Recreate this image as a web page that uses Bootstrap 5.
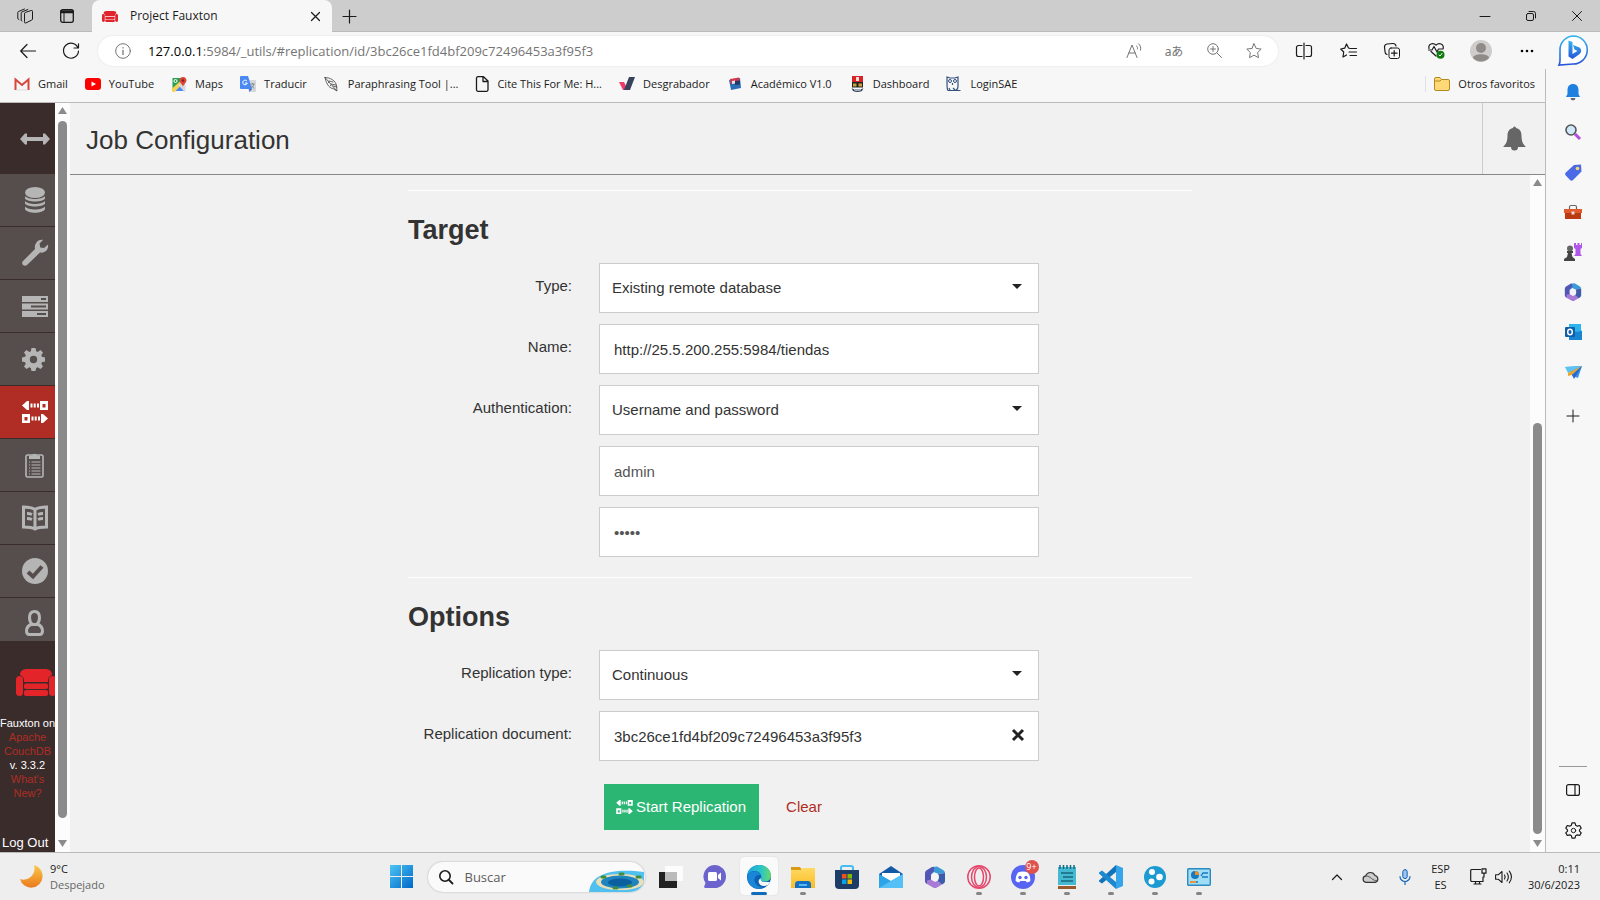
<!DOCTYPE html>
<html lang="es">
<head>
<meta charset="utf-8">
<meta name="viewport" content="width=device-width, initial-scale=1">
<title>Project Fauxton</title>
<link rel="stylesheet" href="https://cdn.jsdelivr.net/npm/bootstrap@5.3.0/dist/css/bootstrap.min.css">
<style>
  body { height: 100vh; overflow: hidden; background: #f7f7f7; color: #1b1b1b; font: 12px/16px "Open Sans", "Noto Sans", sans-serif; }
  svg { display: block; flex: none; overflow: visible; }
  .ln { fill: none; stroke: currentColor; stroke-linecap: round; stroke-linejoin: round; }
  .bare { background: none; border: 0; padding: 0; color: inherit; display: flex; align-items: center; justify-content: center; flex: none; }
  a { text-decoration: none; }

  /* browser frame */
  .titlebar { height: 32px; background: #cdcdcd; box-shadow: inset 0 -1px #bbb; }
  .w-34 { width: 34px; }
  .w-42 { width: 42px; }
  .w-46 { width: 46px; }
  .browser-tab { width: 240px; height: 32px; background: #f7f7f7; border-radius: 8px 8px 0 0; padding: 0 12px 0 10px; }
  .toolbar { height: 37px; color: #1b1b1b; }
  .address { height: 30px; background: #fff; border-radius: 15px; color: #757575; box-shadow: 0 0 2px #ddd; }
  .address .url { font-size: 13px; }
  .translate { font: 12px "Noto Sans", "Noto Sans CJK JP", sans-serif; }
  .w-40 { width: 40px; }
  .w-44 { width: 44px; }
  .bookmarks { height: 34px; border-bottom: 1px solid #bbb; padding: 0 10px 3px 14px; font-size: 11px; gap: 17px; }
  .bookmarks a { color: #1b1b1b; gap: 8px; white-space: nowrap; }
  .edgebar { width: 55px; border-left: 1px solid #bbb; padding-top: 3px; padding-bottom: 2px; }
  .edgebar .bare { width: 54px; height: 40px; }
  .edgebar hr { width: 28px; margin: 0 auto 3px; color: #999; opacity: 1; }

  /* Fauxton */
  .fauxton { font-family: "Liberation Sans", Arial, sans-serif; background: #f1f1f1; color: #333; }
  .mainnav { width: 55px; background: #3a2c2b; overflow: hidden; color: #b5b5b5; }
  .mainnav .burger { height: 71px; padding-left: 20px; justify-content: flex-start; width: 55px; }
  .mainnav .item { height: 53px; background: #564e4c; border-bottom: 1px solid #3a2c2b; padding-left: 22px; display: flex; align-items: center; color: #b5b5b5; }
  .mainnav .item.active { background: #af2d24; color: #fff; }
  .mainnav .item.last { height: 43px; border: 0; padding-top: 6px; }
  .navfoot { font-size: 11px; line-height: 14px; color: #fff; text-align: center; }
  .navfoot a { color: #af2d24; display: block; }
  .logout { font-size: 13px; color: #fff; padding: 0 0 1px 2px; white-space: nowrap; }
  .vbar { width: 15px; background: #fcfcfc; color: #8b8b8b; padding: 4px 3px; }
  .vbar .thumb { width: 9px; border-radius: 5px; background: #8b8b8b; margin: 6px 0 22px; }
  .vbar .above { flex: 73 0 0; }
  .vbar .thumb.lower { flex: 127 0 0; margin: 0 0 6px; }
  .pagehead { height: 72px; border-bottom: 1px solid #888; }
  .pagehead h1 { font-size: 26px; line-height: 32px; margin: 3px 0 0 16px; font-weight: 400; }
  .bellcell { width: 63px; border-left: 1px solid #ccc; color: #666; }
  .formcol { width: 784px; max-width: 100%; margin: 0 auto; padding-top: 15px; }
  .formcol hr { margin: 0; border-top: 1px solid #fff; opacity: 1; }
  .formcol .fieldrow + hr { margin-top: 20px; }
  .formcol h2 { font-size: 27px; line-height: 32px; font-weight: 700; margin: 23px 0 17px; }
  .fieldrow { display: grid; grid-template-columns: 164px 440px; column-gap: 27px; margin-bottom: 11px; font-size: 15px; }
  .fieldrow label { text-align: right; line-height: 20px; padding-top: 13px; }
  .fieldrow .form-control, .fieldrow .form-select { height: 50px; border: 1px solid #ccc; border-radius: 0; font-size: 15px; background: #fff; color: #333; padding: 0 14px; }
  .fieldrow .form-select { padding: 0 12px; }
  .fieldrow .form-control.soft { color: #555; }
  .overlay { position: absolute; right: 17px; top: 21px; pointer-events: none; }
  .overlay.x { top: 18px; right: 15px; pointer-events: auto; }
  .btn-go { background: #2cb673; color: #fff; border: 0; border-radius: 0; height: 46px; padding: 0 13px 0 12px; font-size: 15px; display: flex; align-items: center; gap: 3px; }
  .actions { padding-left: 196px; margin-top: 23px; gap: 27px; }
  .actions .bare { color: #af2d24; font-size: 15px; }

  /* taskbar */
  .taskbar { height: 48px; background: #eee; border-top: 1px solid #bbb; display: grid; grid-template-columns: 1fr auto 1fr; font-size: 11px; }
  .task { width: 44px; height: 47px; position: relative; }
  .task.on::before { content: ""; position: absolute; inset: 4px 3px 5px; background: #fafafa; border-radius: 4px; box-shadow: 0 0 1px #bbb; }
  .task svg { position: relative; }
  .task.run::after, .task.on::after { content: ""; position: absolute; bottom: 5px; left: 19px; width: 6px; height: 3px; border-radius: 2px; background: #858585; }
  .task.on::after { left: 14px; width: 16px; background: #0f6cbd; }
  .searchbox { width: 217px; height: 30px; margin: 0 4px; border-radius: 15px; background: #fafafa; box-shadow: 0 0 2px #aaa; overflow: hidden; padding-left: 11px; }
  .searchbox input { border: 0; background: none; padding: 0; width: 120px; font-size: 13px; outline: 0; }
  .searchbox input::placeholder { color: #5c5c5c; }
  .weather { line-height: 16px; margin-left: 7px; }
  .weather .sky { color: #666; }
  .count { position: absolute; right: 6px; top: 7px; width: 14px; height: 14px; border-radius: 7px; background: #e0524d; color: #fff; font-size: 9px; line-height: 14px; text-align: center; z-index: 1; }
</style>
</head>
<body class="d-flex flex-column">

<svg width="0" height="0" class="position-absolute" aria-hidden="true">
  <defs>
    <linearGradient id="gBlue" x1="0" y1="0" x2="1" y2="1"><stop offset="0" stop-color="#4cc5f5"/><stop offset="1" stop-color="#0067c8"/></linearGradient>
    <linearGradient id="gBing" x1="0" y1="0" x2="0" y2="1"><stop offset="0" stop-color="#35b5ee"/><stop offset="1" stop-color="#2954d8"/></linearGradient>
    <linearGradient id="gEdge" x1="0" y1="0" x2="1" y2="0"><stop offset="0" stop-color="#1ba3df"/><stop offset=".6" stop-color="#2cc6c5"/><stop offset="1" stop-color="#68d968"/></linearGradient>
    <linearGradient id="gMoon" x1="0" y1="0" x2="0" y2="1"><stop offset="0" stop-color="#f9c847"/><stop offset="1" stop-color="#ea7a1f"/></linearGradient>
    <linearGradient id="gFold" x1="0" y1="0" x2="0" y2="1"><stop offset="0" stop-color="#ffda63"/><stop offset="1" stop-color="#fbbb25"/></linearGradient>
  </defs>
  <symbol id="sofa" viewBox="0 0 40 27">
    <path d="M4 6C4 2 7 0 11 0h18c4 0 7 2 7 6-3 1-4 3-4 6v1H8v-1c0-3-1-5-4-6z"/><rect x="0" y="7" width="7" height="20" rx="3.500"/><rect x="33" y="7" width="7" height="20" rx="3.500"/><rect x="8" y="14.500" width="24" height="5.500" rx="2"/><rect x="8" y="21" width="24" height="6" rx="2"/>
  </symbol>
  <symbol id="repl" viewBox="0 0 26 22">
    <path d="M7 0v9H5L0 4.500 5 0zM8.500 2.500h2v4h-2zM11.700 2.500h2v4h-2zM15 2.500h2v4h-2zM19 13v9h2l5-4.500-5-4.500zM9.500 15.500h2v4h-2zM12.700 15.500h2v4h-2zM16 15.500h2v4h-2z"/><path fill-rule="evenodd" d="M18 0h8v9h-8zM20.500 3v3.500h3V3zM0 13h8v9H0zM2.500 16v3.500h3V16z"/>
  </symbol>
  <symbol id="m365" viewBox="0 0 22 22">
    <path d="M8 1l5-.6L19 4c1 .6 2 1.600 2 3l-7 1-4-2-3 3V4z" fill="#3b9bd8"/><path d="M8 1L3 4C2 4.600 1 6 1 7v8c0 1.500 1 2.500 2 3l4-3V8l3-3V1z" fill="#5256b4"/><path d="M3 18l6 3.500c1.500.8 3 .8 4 0l5-3-4-4-3 1.500-4-2.500-4 1z" fill="#a77bd6"/><path d="M21 7v8c0 1.500-1 2.500-3 3.500L14 15V8z" fill="#3c5ba9"/><circle cx="11" cy="11" r="4" fill="#f4f4f4"/>
  </symbol>
</svg>

<header class="titlebar d-flex align-items-center">
  <div class="d-flex align-items-center ps-1">
    <button class="bare w-42" aria-label="Áreas de trabajo"><svg width="18" height="16" class="ln" viewBox="0 0 18 16"><path d="M8.500 5.500a1 1 0 0 1 .7-1l6-2a1 1 0 0 1 1.300 1V11a1 1 0 0 1-.7 1l-6 3a1 1 0 0 1-1.300-1zM6 13l-.8-.5V5a1 1 0 0 1 .7-1l6-2.500M3 11.500l-1.200-.8V4.500a1 1 0 0 1 .7-1l6-2.500"/></svg></button>
    <button class="bare w-42" aria-label="Acciones de pestaña"><svg width="14" height="14" class="ln" viewBox="0 0 14 14"><rect x=".7" y=".7" width="12.600" height="12.600" rx="2" stroke-width="1.300"/><path d="M1 2h12M1 3.500h12" stroke-width="1.600"/><path d="M4 4v9"/></svg></button>
  </div>
  <div class="browser-tab d-flex align-items-center ms-1">
    <svg width="16" height="11" fill="#e0242b"><use href="#sofa"/></svg>
    <span class="ms-2 ps-1 flex-grow-1">Project Fauxton</span>
    <button class="bare" aria-label="Cerrar pestaña"><svg width="9" height="9" class="ln" viewBox="0 0 9 9"><path d="M.5.5l8 8M8.500.5l-8 8" stroke-width="1.200"/></svg></button>
  </div>
  <button class="bare w-34" aria-label="Nueva pestaña"><svg width="13" height="13" class="ln" viewBox="0 0 13 13"><path d="M6.500 0v13M0 6.500h13" stroke-width="1.200"/></svg></button>
  <div class="d-flex ms-auto">
    <button class="bare w-46" aria-label="Minimizar"><svg width="10" height="10" class="ln"><path d="M0 5.500h10"/></svg></button>
    <button class="bare w-46" aria-label="Restaurar"><svg width="10" height="10" class="ln" viewBox="0 0 10 10"><rect x=".5" y="2.500" width="7" height="7" rx="1.500"/><path d="M3 .5h4.500a2 2 0 0 1 2 2V7"/></svg></button>
    <button class="bare w-46" aria-label="Cerrar"><svg width="10" height="10" class="ln" viewBox="0 0 10 10"><path d="M.5.5l9 9M9.500.5l-9 9"/></svg></button>
  </div>
</header>

<div class="toolbar d-flex align-items-center">
  <button class="bare w-40 ms-2" aria-label="Atrás"><svg width="16" height="14" class="ln" viewBox="0 0 16 14"><path d="M15.500 7H.7M7 .5L.7 7 7 13.500" stroke-width="1.200"/></svg></button>
  <button class="bare w-46" aria-label="Actualizar"><svg width="16" height="16" class="ln" viewBox="0 0 16 16"><path d="M15 5A7.500 7.500 0 1 0 15.500 8M15.500.8V5H11" stroke-width="1.200"/></svg></button>
  <div class="address d-flex align-items-center flex-grow-1 ms-1">
    <button class="bare mx-3" aria-label="Información del sitio"><svg width="18" height="16" class="ln" viewBox="0 0 16 16"><circle cx="8" cy="8" r="7.300"/><path d="M8 7.500v4M8 4.700v.2" stroke-width="1.300"/></svg></button>
    <div class="url flex-grow-1" role="textbox" aria-label="Dirección"><span class="text-black">127.0.0.1</span>:5984/_utils/#replication/id/3bc26ce1fd4bf209c72496453a3f95f3</div>
    <button class="bare w-40" aria-label="Leer en voz alta"><svg width="17" height="15" class="ln" viewBox="0 0 17 15"><path d="M1 14.500L6 2l5 12.500M2.700 10h6.600M10.500 3c1 .7 1.300 2 1 3M12.500.7c2 1.500 2.700 4 2 6.500"/></svg></button>
    <button class="bare w-40 translate" aria-label="Traducir" lang="ja">aあ</button>
    <button class="bare w-40" aria-label="Zoom"><svg width="15" height="15" class="ln" viewBox="0 0 15 15"><circle cx="6" cy="6" r="5.300"/><path d="M10 10l4.500 4.500M6 3.500v5M3.500 6h5"/></svg></button>
    <button class="bare w-40 me-1" aria-label="Agregar a favoritos"><svg width="16" height="16" class="ln" viewBox="0 0 16 16"><path d="M8 .8l2.200 4.600 5 .7-3.600 3.500.9 5.100L8 12.200l-4.500 2.500.9-5.100L.8 6.100l5-.7z"/></svg></button>
  </div>
  <div class="d-flex ms-1">
    <button class="bare w-44" aria-label="Pantalla dividida"><svg width="16" height="16" class="ln" viewBox="0 0 16 16"><path d="M8 0v16M6 2.500H2.500A2 2 0 0 0 .5 4.500v7a2 2 0 0 0 2 2H6M10 2.500h3.500a2 2 0 0 1 2 2v7a2 2 0 0 1-2 2H10" stroke-width="1.200"/></svg></button>
    <button class="bare w-44" aria-label="Favoritos"><svg width="17" height="16" class="ln" viewBox="0 0 17 16"><path d="M10 5.500L8.500 5 6.500 1 4.700 5.200.7 6l3 3-.7 5 3.500-2M10.500 5.500h6M9 9h7.500M10 12.500h6.500" stroke-width="1.200"/></svg></button>
    <button class="bare w-44" aria-label="Colecciones"><svg width="16" height="16" class="ln" viewBox="0 0 16 16"><rect x="5" y="5" width="10.500" height="10.500" rx="2"/><path d="M10.200 7.500v5.500M7.500 10.200h5.500M3 11.500A3 3 0 0 1 1 8.500L.5 4a3 3 0 0 1 2.500-3L9 .5a3 3 0 0 1 3 2.500" stroke-width="1.200"/></svg></button>
    <button class="bare w-44" aria-label="Rendimiento"><svg width="17" height="17" class="ln" viewBox="0 0 17 17"><path d="M8 14L3 9.500M1 6.500C0 2 5 0 8 3.200 11 0 16 2 15.200 6.500M.5 8H4l2-3.500 3 5.500 1.500-3H15" stroke-width="1.200"/><circle cx="12.500" cy="12.800" r="4" fill="#107c10" stroke="none"/><path d="M11 13l1 1 2-2.500" stroke="#fff"/></svg></button>
    <button class="bare w-46" aria-label="Perfil"><svg width="22" height="22" viewBox="0 0 22 22"><circle cx="11" cy="11" r="11" fill="#cfcdcb"/><circle cx="11" cy="8" r="5" fill="#8f8b89"/><path d="M3 18c0-5 16-5 16 0a11 11 0 0 1-16 0z" fill="#8f8b89"/></svg></button>
    <button class="bare w-46" aria-label="Configuración y más"><svg width="14" height="4"><circle cx="2" cy="2" r="1.300"/><circle cx="7" cy="2" r="1.300"/><circle cx="12" cy="2" r="1.300"/></svg></button>
    <button class="bare w-46" aria-label="Bing"><svg width="30" height="31" viewBox="0 0 30 31"><path d="M15.500 1A13.700 13.700 0 1 1 15 29L1 30c1.500-3 1-5 1-7V14.500A13.700 13.700 0 0 1 15.500 1z" fill="#fff" stroke="url(#gBing)" stroke-width="1.600"/><path d="M10.500 5.500l4 1.500V19l5-3-3-1.500-1.500-4.500 6.500 2.500c2.500 2 2 5.500-.5 7l-6.500 4.500-4-2.500z" fill="url(#gBing)"/></svg></button>
    <span class="ms-1"></span>
  </div>
</div>

<div class="d-flex flex-grow-1 overflow-hidden">
  <div class="d-flex flex-column flex-grow-1 overflow-hidden">
    <nav class="bookmarks d-flex align-items-center" aria-label="Favoritos">
      <a href="#" class="d-flex align-items-center"><svg width="16" height="12" viewBox="0 0 16 12"><path d="M1.500 12V1.500L8 7l6.500-5.500V12" fill="none" stroke="#d5483b" stroke-width="2"/><path d="M2.500 12h11" stroke="#ddd"/></svg>Gmail</a>
      <a href="#" class="d-flex align-items-center"><svg width="16" height="12"><rect width="16" height="12" rx="3" fill="#f00"/><path d="M6.500 3.500v5L11 6z" fill="#fff"/></svg>YouTube</a>
      <a href="#" class="d-flex align-items-center"><svg width="16" height="15" viewBox="0 0 15 15"><path d="M1 1h12L1 13z" fill="#2c9f55"/><path d="M1 14L13 2v12z" fill="#4a89f3"/><path d="M0 12L9 4l3 2-9 9H1z" fill="#f7d154"/><path d="M7 8l6 7 1-1V8l-4-2z" fill="#d9dadd"/><path d="M11.500 0C9 0 8 2 8 3.500c0 2 3 3.500 3.500 6.500.5-3 3.500-4.500 3.500-6.500C15 2 14 0 11.500 0z" fill="#db4437"/><circle cx="11.500" cy="3.500" r="1.200" fill="#7b231e"/><circle cx="4" cy="4" r="1.500" fill="none" stroke="#fff"/></svg>Maps</a>
      <a href="#" class="d-flex align-items-center"><svg width="16" height="16" viewBox="0 0 16 16"><path d="M6 4h9a1 1 0 0 1 1 1v10a1 1 0 0 1-1 1H9z" fill="#d4d6d9"/><path d="M1 0h7l4 13H1a1 1 0 0 1-1-1V1a1 1 0 0 1 1-1z" fill="#4a89f3"/><path d="M9 13h3l-2.500 3z" fill="#3367d6"/><path d="M7 5.200A2.300 2.300 0 1 0 7.300 7H5" fill="none" stroke="#fff"/><path d="M10.500 8h4M12.500 7v1M14 8c-.5 2-1.500 3-3 4M11.500 9.500l2.500 3" fill="none" stroke="#6f7a80" stroke-width=".8"/></svg>Traducir</a>
      <a href="#" class="d-flex align-items-center"><svg width="16" height="15" class="ln" viewBox="0 0 16 15" stroke-width=".8"><path d="M1 .5l11.500 13M1 .5c5 0 11 3 11.500 8.500l.5 5-4-2.500C4 11 2 5 1 .5M5 4l4 1M7 7l5 1M9 9l4 1M4 6l1-1M6 9l1-1" stroke="#444"/></svg>Paraphrasing Tool |...</a>
      <a href="#" class="d-flex align-items-center"><svg width="14" height="16" class="ln" viewBox="1 0 14 16" stroke-width="1.300"><path d="M2.500 2A1.500 1.500 0 0 1 4 .7h5.500L14 5v8.800a1.500 1.500 0 0 1-1.500 1.500H4a1.500 1.500 0 0 1-1.500-1.500zM9 .7V5.500h5"/></svg>Cite This For Me: H...</a>
      <a href="#" class="d-flex align-items-center"><svg width="16" height="14" viewBox="0 0 16 14"><path d="M0 5h5l4 8H4z" fill="#ef3b68"/><path d="M10 0h6l-5 13H5z" fill="#38435c"/></svg>Desgrabador</a>
      <a href="#" class="d-flex align-items-center"><svg width="16" height="14" viewBox="-2 0 16 14"><path d="M0 3l11-2 1 10-10 2z" fill="#2a6fb5"/><path d="M1 2l9-1.500.5 5L2 7z" fill="#d9344a"/><path d="M6 4l5-.5v4L6 8z" fill="#213c6b"/><path d="M3 4l3-.5v3L3 7z" fill="#e9dfe5"/></svg>Académico V1.0</a>
      <a href="#" class="d-flex align-items-center"><svg width="16" height="16" viewBox="-2 0 16 16"><path d="M1 0h11v6H1z" fill="#d8232a"/><path d="M5 1h3v4H5z" fill="#f0e2d0"/><path d="M1 6h11v5.500H1z" fill="#222"/><path d="M2 7.500h3.500v3H2zM7.500 7.500H11v3H7.500z" fill="#c7a13b"/><path d="M.5 12c3 2 9 2 12 0l-1.500 3c-3 1.300-6 1.300-9 0z" fill="#34435c"/><path d="M3 13.700c2 .8 5 .8 7 0" fill="none" stroke="#dde"/></svg>Dashboard</a>
      <a href="#" class="d-flex align-items-center"><svg width="16" height="16" viewBox="0 0 16 16" fill="none" stroke="#34517e"><path d="M1 1l3 1h5l3-1v9c0 3-1 4-3 4.500H2C1 13 1 11 1 9zM9 14.500h5.500M6.500 7v2M3 12l1 2M7 12l2 2" stroke-width="1.200"/><circle cx="4" cy="5" r="1.500"/><circle cx="9" cy="5" r="1.500"/></svg>LoginSAE</a>
      <a href="#" class="d-flex align-items-center ms-auto border-start ps-2"><svg width="16" height="14" viewBox="0 0 16 14"><path d="M.5 2A1.500 1.500 0 0 1 2 .5h4l1.500 2H14A1.500 1.500 0 0 1 15.500 4v8a1.500 1.500 0 0 1-1.500 1.500H2A1.500 1.500 0 0 1 .5 12z" fill="#ffd977" stroke="#b58a1d"/><path d="M.5 4H6l1.500-1.500" fill="none" stroke="#b58a1d"/></svg>Otros favoritos</a>
    </nav>

    <div class="fauxton d-flex flex-grow-1 overflow-hidden">
      <nav class="mainnav d-flex flex-column flex-shrink-0">
        <button class="bare burger" aria-label="Menú"><svg width="30" height="12" viewBox="0 0 30 12" fill="#b5b5b5"><path d="M0 6l5-5.500h2V4h16V.5h2L30 6l-5 5.500h-2V8H7v3.500H5z"/></svg></button>
        <a class="item" href="#" aria-label="Databases"><svg width="26" height="26" viewBox="0 0 26 26" fill="currentColor"><ellipse cx="13" cy="5.500" rx="10" ry="5.500"/><path d="M3 9c3 4 17 4 20 0v2.500c-2 4-18 4-20 0zM3 14c3 4 17 4 20 0v2.500c-2 4-18 4-20 0zM3 19.500c3 4 17 4 20 0v2.500c-2 5-18 5-20 0z"/></svg></a>
        <a class="item" href="#" aria-label="Setup"><svg width="26" height="26" viewBox="0 0 26 26" fill="currentColor"><path d="M21 0l-3.500 3.500.8 4 3.700.5L26 4.500c1 5-3 9-8 8L5 25c-2 2-6 0-4.500-3.500L13 9c-1-5 3-10 8-9z"/></svg></a>
        <a class="item" href="#" aria-label="Active Tasks"><svg width="26" height="21" viewBox="0 0 26 21" fill="currentColor"><path fill-rule="evenodd" d="M0 0h26v6H0zM19 2v2h5V2zM0 7.500h26v6H0zM9 9.500v2h15v-2zM0 15h26v6H0zM15 17v2h9v-2z"/></svg></a>
        <a class="item" href="#" aria-label="Config"><svg width="23" height="23" viewBox="0 0 23 23" fill="currentColor"><path fill-rule="evenodd" d="M9.500 0h4l.7 3.200 1.500.7L18.500 2 21 4.500l-1.700 2.800.6 1.500 3.100.7v4l-3.100.7-.6 1.500 1.700 2.800L18.500 21l-2.800-1.700-1.500.6-.7 3.100h-4l-.7-3.100-1.500-.6L4.500 21 2 18.500l1.800-2.800-.7-1.500L0 13.500v-4l3.100-.7.7-1.500L2 4.500 4.500 2l2.800 1.900 1.500-.7zM11.500 7.800a3.700 3.700 0 1 0 0 7.400 3.700 3.700 0 0 0 0-7.400z"/></svg></a>
        <a class="item active" href="#" aria-label="Replication"><svg width="26" height="22" fill="currentColor"><use href="#repl"/></svg></a>
        <a class="item" href="#" aria-label="Reports"><svg width="26" height="26" viewBox="0 0 26 26"><rect x="4" y="3" width="17" height="22" rx="1.500" fill="none" stroke="currentColor" stroke-width="1.600"/><path d="M7 7V3.500h3a2.700 2.700 0 0 1 5 0h3V7z" fill="currentColor"/><path d="M7 10h1M9.500 10h9M7 13h1M9.500 13h9M7 16h1M9.500 16h9M7 19h1M9.500 19h9M7 22h1M9.500 22h9" stroke="currentColor" stroke-width="1.200"/></svg></a>
        <a class="item" href="#" aria-label="Documentation"><svg width="26" height="26" viewBox="0 0 26 26" fill="none" stroke="currentColor"><path d="M1.500 2c4 0 8 .3 11.500 2.500C16.500 2.300 20.500 2 24.500 2v20c-4 0-8.500 0-11.500 2-3-2-7.500-2-11.500-2zM13 4.500V24" stroke-width="3"/><path d="M5 8.500c2 0 3.500.3 5 1M5 13.500c2 0 3.500.3 5 1M21 8.500c-2 0-3.500.3-5 1M21 13.500c-2 0-3.500.3-5 1" stroke-width="3"/></svg></a>
        <a class="item" href="#" aria-label="Verify"><svg width="26" height="26" viewBox="0 0 26 26"><circle cx="13" cy="13" r="13" fill="currentColor"/><path d="M6 14l5 4.500L20 8.500" fill="none" stroke="#564e4c" stroke-width="4"/></svg></a>
        <a class="item last" href="#" aria-label="Account"><svg width="26" height="26" viewBox="0 0 26 26" fill="none" stroke="currentColor" stroke-width="3"><path d="M12.500 1.500c3 0 5 2 5 6 0 3-1 5-2.500 6.500 3 1 5.500 3 5.500 7 0 2-1 3.500-3 3.500h-10c-2 0-3-1.500-3-3.500 0-4 2.500-6 5.500-7-1.500-1.500-2.500-3.500-2.500-6.500 0-4 2-6 5-6zM9 14.500h7"/></svg></a>
        <div class="ps-3 mt-4 pt-1 pb-3 mb-1"><svg width="40" height="27" fill="#e3252a"><use href="#sofa"/></svg></div>
        <div class="navfoot text-nowrap">Fauxton on <a href="#">Apache<br>CouchDB</a>v. 3.3.2 <a href="#">What's<br>New?</a></div>
        <a class="logout mt-auto" href="#">Log Out</a>
      </nav>
      <div class="vbar d-flex flex-column align-items-center flex-shrink-0">
        <svg width="9" height="8"><path d="M4.500 0L9 7H0z" fill="currentColor"/></svg>
        <div class="thumb flex-grow-1"></div>
        <svg width="9" height="8"><path d="M4.500 7L9 0H0z" fill="currentColor"/></svg>
      </div>
      <main class="d-flex flex-column flex-grow-1 overflow-hidden">
        <div class="pagehead d-flex align-items-center flex-shrink-0">
          <h1 class="flex-grow-1">Job Configuration</h1>
          <button class="bare bellcell h-100" aria-label="Notifications"><svg width="23" height="25" viewBox="0 0 23 25" fill="#666"><path d="M10 2a1.500 1.500 0 0 1 3 0c4 .8 5.500 4 5.500 7.500 0 6 1.500 8.500 4.500 11.500H0c3-3 4.500-5.500 4.500-11.500C4.500 6 6 2.800 10 2zM8 21h7a3.500 3.500 0 0 1-7 0z"/></svg></button>
        </div>
        <div class="d-flex flex-grow-1 overflow-hidden">
          <form class="flex-grow-1 overflow-hidden">
            <div class="formcol">
              <hr>
              <h2>Target</h2>
              <div class="fieldrow"><label for="ttype">Type:</label>
                <div class="position-relative"><select id="ttype" class="form-select"><option>Existing remote database</option></select><svg class="overlay" width="10" height="5"><path d="M0 0h10L5 5z" fill="#222"/></svg></div></div>
              <div class="fieldrow"><label for="tname">Name:</label><input id="tname" class="form-control" value="http://25.5.200.255:5984/tiendas"></div>
              <div class="fieldrow"><label for="tauth">Authentication:</label>
                <div class="position-relative"><select id="tauth" class="form-select"><option>Username and password</option></select><svg class="overlay" width="10" height="5"><path d="M0 0h10L5 5z" fill="#222"/></svg></div></div>
              <div class="fieldrow"><span></span><input class="form-control soft" aria-label="Username" value="admin"></div>
              <div class="fieldrow"><span></span><input class="form-control soft" type="password" aria-label="Password" value="admin"></div>
              <hr>
              <h2>Options</h2>
              <div class="fieldrow"><label for="rtype">Replication type:</label>
                <div class="position-relative"><select id="rtype" class="form-select"><option>Continuous</option></select><svg class="overlay" width="10" height="5"><path d="M0 0h10L5 5z" fill="#222"/></svg></div></div>
              <div class="fieldrow"><label for="rdoc">Replication document:</label>
                <div class="position-relative"><input id="rdoc" class="form-control" value="3bc26ce1fd4bf209c72496453a3f95f3"><button type="button" class="bare overlay x" aria-label="Clear document"><svg width="12" height="12"><path d="M1 1l10 10M11 1L1 11" stroke="#222" stroke-width="3"/></svg></button></div></div>
              <div class="actions d-flex align-items-center">
                <button type="button" class="btn-go"><svg width="17" height="14" fill="#fff"><use href="#repl"/></svg>Start Replication</button>
                <a href="#" class="bare">Clear</a>
              </div>
            </div>
          </form>
          <div class="vbar d-flex flex-column align-items-center flex-shrink-0">
            <svg width="9" height="8"><path d="M4.500 0L9 7H0z" fill="currentColor"/></svg>
            <div class="above"></div>
            <div class="thumb lower"></div>
            <svg width="9" height="8"><path d="M4.500 7L9 0H0z" fill="currentColor"/></svg>
          </div>
        </div>
      </main>
    </div>
  </div>

  <aside class="edgebar d-flex flex-column flex-shrink-0" aria-label="Barra lateral">
    <button class="bare" aria-label="Notificaciones"><svg width="14" height="16" viewBox="0 0 14 16"><path d="M7 0c3 0 5.500 2 5.500 6v4L14 13H0l1.500-3V6C1.500 2 4 0 7 0z" fill="#2080e0"/><path d="M4.500 14h5a2.500 2.500 0 0 1-5 0z" fill="#667"/></svg></button>
    <button class="bare" aria-label="Buscar"><svg width="16" height="16" viewBox="0 0 16 16"><path d="M10 10l5 5" stroke="#b44be0" stroke-width="3"/><circle cx="6" cy="6" r="5" fill="#cfe8f7" stroke="#555" stroke-width="1.600"/></svg></button>
    <button class="bare" aria-label="Compras"><svg width="17" height="17" viewBox="0 0 17 17"><path d="M9 1l7-.5.5 7L8 16c-1 1-2 1-3 0L.8 11.500c-1-1-.8-2 0-3z" fill="#4a6ae8"/><circle cx="12.500" cy="4.500" r="1.800" fill="#f5d76b"/></svg></button>
    <button class="bare" aria-label="Herramientas"><svg width="18" height="15" viewBox="0 0 18 15"><path d="M5.500 4V2c0-1 .5-1.500 1.500-1.500h4c1 0 1.500.5 1.500 1.500v2" fill="none" stroke="#666" stroke-width="1.200"/><path d="M0 4h18v4H0z" fill="#e05a2b"/><path d="M1 8h16v6H1z" fill="#bb3a12"/><path d="M7.500 6.500h3v3h-3z" fill="#ddd"/></svg></button>
    <button class="bare" aria-label="Juegos"><svg width="18" height="18" viewBox="0 0 18 18"><path d="M10 0h2v2h1.500V0h2v2H17V0h1v5l-1.500 1v5l1.500 2h-8l1.500-2V6L10 5z" fill="#b057ea"/><circle cx="6" cy="5.500" r="3" fill="#666"/><path d="M3 8h6v2H7.500l1 4 2.500 2v2H0v-2l3-2 1-4H3z" fill="#444"/></svg></button>
    <button class="bare" aria-label="Microsoft 365"><svg width="18" height="18"><use href="#m365"/></svg></button>
    <button class="bare" aria-label="Outlook"><svg width="17" height="16" viewBox="0 0 17 16"><path d="M4 0h12v6l1 1v9H4z" fill="#2db4ee"/><path d="M4 9l13-2v9H4z" fill="#1785d0"/><rect y="3" width="10" height="10" rx="1" fill="#0f5ea8"/><ellipse cx="5" cy="8" rx="2.300" ry="2.800" fill="none" stroke="#fff" stroke-width="1.500"/></svg></button>
    <button class="bare" aria-label="Drop"><svg width="17" height="13" viewBox="0 0 17 13"><path d="M0 1l17-1-4 12-5-2z" fill="#3a93ea"/><path d="M0 1l17-1L3 7z" fill="#5cc3f3"/><path d="M17 0L3 7v3l4-1z" fill="#e9a62f"/><path d="M17 0L7 9l2 4z" fill="#2667cf"/></svg></button>
    <button class="bare mt-1" aria-label="Personalizar"><svg width="12" height="12" class="ln"><path d="M6 0v12M0 6h12"/></svg></button>
    <hr class="mt-auto">
    <button class="bare" aria-label="Ocultar barra"><svg width="14" height="12" class="ln"><rect x=".6" y=".6" width="12.800" height="10.800" rx="2" stroke-width="1.200"/><path d="M9 1v10" stroke-width="1.200"/></svg></button>
    <button class="bare" aria-label="Configuración"><svg width="17" height="17" class="ln" viewBox="0 0 17 17"><circle cx="8.500" cy="8.500" r="2.200"/><path d="M7 .8h3l.6 2.400 1.700 1 2.400-.7 1.500 2.600-1.700 1.700v1.400l1.700 1.700-1.500 2.600-2.400-.7-1.700 1-.6 2.400H7l-.6-2.400-1.700-1-2.400.7L.8 10.900l1.700-1.700V7.800L.8 6.100l1.500-2.600 2.400.7 1.700-1z" stroke-width="1.200"/></svg></button>
  </aside>
</div>

<footer class="taskbar align-items-center">
  <div class="d-flex align-items-center ps-3">
    <svg class="ms-1" width="23" height="23" viewBox="0 0 23 23"><path d="M14 0a11.500 11.500 0 1 1-14 14C8 17 17 9 14 0z" fill="url(#gMoon)"/></svg>
    <div class="weather"><div>9°C</div><div class="sky">Despejado</div></div>
  </div>
  <div class="d-flex align-items-center">
    <button class="bare task" aria-label="Inicio"><svg width="23" height="23"><path d="M0 0h11v11H0zM12 0h11v11H12zM0 12h11v11H0zM12 12h11v11H12z" fill="url(#gBlue)"/></svg></button>
    <label class="searchbox d-flex align-items-center">
      <svg width="14" height="14" class="ln"><circle cx="6" cy="6" r="5.200" stroke-width="1.600"/><path d="M10 10l3.500 3.500" stroke-width="1.800"/></svg>
      <input class="ms-2 ps-1 flex-grow-1" type="search" placeholder="Buscar" aria-label="Buscar">
      <svg class="mt-2" width="56" height="22" viewBox="0 0 56 22"><path d="M0 22C2 4 22-2 55 2v20z" fill="#4fc0ef"/><ellipse cx="31" cy="12" rx="24" ry="8" fill="#ecdfb8"/><ellipse cx="31" cy="12" rx="19" ry="6.500" fill="#1d84c0"/><ellipse cx="31" cy="12.500" rx="12" ry="4" fill="#0c5f9f"/><path d="M31 4h3M13 7h3M48 7h3M25 18h3M39 16h3" stroke="#3f8d3f" stroke-width="3" stroke-linecap="round"/></svg>
    </label>
    <button class="bare task" aria-label="Vista de tareas"><svg width="24" height="22"><path d="M0 6h18v16H0z" fill="#222"/><path d="M6 0h18v15H6z" fill="#fff" opacity=".8"/><path d="M6 6h12v9H6z" fill="#bbb"/></svg></button>
    <button class="bare task" aria-label="Chat"><svg width="23" height="23" viewBox="0 0 23 23"><path d="M11.500 0a11.500 11.500 0 1 1 0 23H2l-1-1 1.500-4A11.500 11.500 0 0 1 11.500 0z" fill="#6d63cc"/><rect x="5" y="7" width="9" height="9" rx="1.500" fill="#fff"/><path d="M15 10l3-2.500v8L15 13z" fill="#fff"/></svg></button>
    <button class="bare task on" aria-label="Edge"><svg width="24" height="24" viewBox="0 0 24 24"><circle cx="12" cy="12" r="12" fill="#0f5fb4"/><path d="M0 11C1 4 6 0 12 0c7 0 12 5 12 10.500 0 4-3 6-6 6-3.500 0-5-1.500-4-3C15.500 10 12 6 8 6c-4 0-7 2-8 5z" fill="url(#gEdge)"/><path d="M1 9C4 5 12 5 14 10.500c-3-1.500-7 .5-6.500 5C8 20 12 22 16 23 6 26-2 18 1 9z" fill="#1a86d8"/><path d="M14 13c-1 2 .5 4 4 4h5l-2 3c-4 2-8 1-9-2-1-2 0-4 2-5z" fill="#f7f7f7"/></svg></button>
    <button class="bare task run" aria-label="Explorador"><svg width="24" height="22"><path d="M0 1h9l2 3H0z" fill="#d99a16"/><path d="M0 4h10l2-2h12v20H0z" fill="url(#gFold)"/><path d="M4 22v-4c0-1.500 1-3 3-3h10c2 0 3 1.500 3 3v4z" fill="#1270c4"/><path d="M8 19h8" stroke="#5bb8ee" stroke-width="2"/></svg></button>
    <button class="bare task" aria-label="Microsoft Store"><svg width="24" height="24"><path d="M6 6V3c0-1 1-2 2-2h8c1 0 2 1 2 2v3" fill="none" stroke="#45bdf0" stroke-width="2"/><path d="M0 5h24v15a4 4 0 0 1-4 4H4a4 4 0 0 1-4-4z" fill="#1d3c66"/><path d="M7 9h4.500v4.500H7z" fill="#f25022"/><path d="M12.500 9H17v4.500h-4.500z" fill="#7fba00"/><path d="M7 14.500h4.500V19H7z" fill="#00a4ef"/><path d="M12.500 14.500H17V19h-4.500z" fill="#ffb900"/></svg></button>
    <button class="bare task" aria-label="Correo"><svg width="24" height="22"><path d="M0 8l12-8 12 8v5H0z" fill="#1359a8"/><path d="M3 7h18v8H3z" fill="#fff"/><path d="M0 8l12 7 12-7v14H0z" fill="#2da3e8"/><path d="M0 22L24 8v14z" fill="#55c0f5"/></svg></button>
    <button class="bare task" aria-label="Microsoft 365"><svg width="22" height="22"><use href="#m365"/></svg></button>
    <button class="bare task run" aria-label="Opera GX"><svg width="24" height="24" fill="none" stroke="#e5486b" stroke-width="1.500"><circle cx="12" cy="12" r="11.200"/><ellipse cx="12" cy="12" rx="7.500" ry="10.500"/><ellipse cx="12" cy="12" rx="4.500" ry="9"/></svg></button>
    <button class="bare task run" aria-label="Discord"><svg width="24" height="24"><circle cx="12" cy="12" r="12" fill="#5865f2"/><path d="M7 7.500c3-1.500 7-1.500 10 0 2 3 2.500 6 2.300 8.500-1.300 1-2.600 1.300-3.500 1.500l-1-1.500h-5.600l-1 1.500c-.9-.2-2.200-.5-3.500-1.500C4.500 13.500 5 10.500 7 7.500z" fill="#fff"/><circle cx="9" cy="12.500" r="1.700" fill="#5865f2"/><circle cx="15" cy="12.500" r="1.700" fill="#5865f2"/></svg><span class="count">9+</span></button>
    <button class="bare task run" aria-label="Bloc de notas"><svg width="20" height="24"><path d="M1 2h18v18H1z" fill="#45b8d2"/><path d="M1 21h18v3H1z" fill="#9b5a2d"/><path d="M3 0v4M6.500 0v4M10 0v4M13.500 0v4M17 0v4" stroke="#176a82" stroke-width="1.500"/><path d="M4 8h12M6 12h10M4 16h12" stroke="#14677f" stroke-width="1.500"/></svg></button>
    <button class="bare task run" aria-label="Visual Studio Code"><svg width="24" height="24" viewBox="0 0 24 24"><path d="M17 0l7 3v18l-7 3z" fill="#34a5ea"/><path d="M17 0v7L3 18.500 0 16.500v-1z" fill="#1173ba"/><path d="M17 24v-7L3 5.500 0 7.500v1z" fill="#1b88d0"/></svg></button>
    <button class="bare task run" aria-label="Hamachi"><svg width="22" height="22"><circle cx="11" cy="11" r="11" fill="#1c9ad2"/><circle cx="8" cy="6" r="3" fill="#fff"/><circle cx="7.500" cy="15.500" r="3" fill="#fff"/><circle cx="15.500" cy="11" r="3.300" fill="#fff"/></svg></button>
    <button class="bare task run" aria-label="Panel de control"><svg width="24" height="18"><rect x=".7" y=".7" width="22.600" height="16.600" rx="1" fill="#9fdcf5" stroke="#2b8bc0" stroke-width="1.400"/><circle cx="8" cy="7" r="4" fill="#1878c0"/><path d="M8 7V3a4 4 0 0 1 4 4z" fill="#f08a24"/><path d="M14 8l2-3h5M15 9h6M3 14h8" stroke="#1878c0" stroke-width="1.300" fill="none"/><path d="M3 14h6" stroke="#e8963c" stroke-width="2"/></svg></button>
  </div>
  <div class="d-flex align-items-center justify-content-end">
    <button class="bare me-3 pe-1" aria-label="Mostrar iconos ocultos"><svg width="10" height="6" class="ln"><path d="M.5 5.500L5 1l4.500 4.500" stroke-width="1.200"/></svg></button>
    <button class="bare me-3 pe-1" aria-label="OneDrive"><svg width="17" height="12" viewBox="0 0 17 12"><path d="M4 11.300a3.300 3.300 0 0 1-.3-6.500A5 5 0 0 1 13 4.500a3.500 3.500 0 0 1 .3 6.800z" fill="#ccc" stroke="#333" stroke-width="1.200"/><path d="M3.500 5c3 0 4 1 6 2.500s3 2 6 2.500" fill="none" stroke="#555"/></svg></button>
    <button class="bare me-3 pe-1" aria-label="Micrófono"><svg width="12" height="16" class="ln" viewBox="0 0 12 16"><rect x="3.800" y=".6" width="4.400" height="9" rx="2.200" fill="#9cc4ee" stroke="#1566b8"/><path d="M1 7.500a5 5 0 0 0 10 0M6 12.500v3" stroke="#1566b8" stroke-width="1.200"/></svg></button>
    <button class="bare flex-column me-3" aria-label="Idioma"><span>ESP</span><span>ES</span></button>
    <button class="bare me-2 ms-1" aria-label="Red"><svg width="17" height="17" class="ln" viewBox="0 0 17 17"><path d="M10.500 1.500H2A1.200 1.200 0 0 0 .7 2.700v9.600A1.200 1.200 0 0 0 2 13.500h11V9M4 16h7M5.500 13.500V16M9.500 13.500V16M12 .8h4v4.400h-4zM14 5.200V9" stroke-width="1.200"/></svg></button>
    <button class="bare me-3" aria-label="Volumen"><svg width="17" height="14" class="ln" viewBox="0 0 17 14"><path d="M.6 4.800h2.600L7 1.500v11L3.200 9.200H.6zM9.500 5c.8 1.200.8 2.800 0 4M12 3c1.700 2.500 1.700 5.500 0 8M14.300 1.200c2.600 3.500 2.600 8 0 11.600" stroke-width="1.100"/></svg></button>
    <div class="text-end me-3 pe-1"><div>0:11</div><div>30/6/2023</div></div>
  </div>
</footer>
<script src="https://cdn.jsdelivr.net/npm/bootstrap@5.3.0/dist/js/bootstrap.bundle.min.js"></script>
</body>
</html>
